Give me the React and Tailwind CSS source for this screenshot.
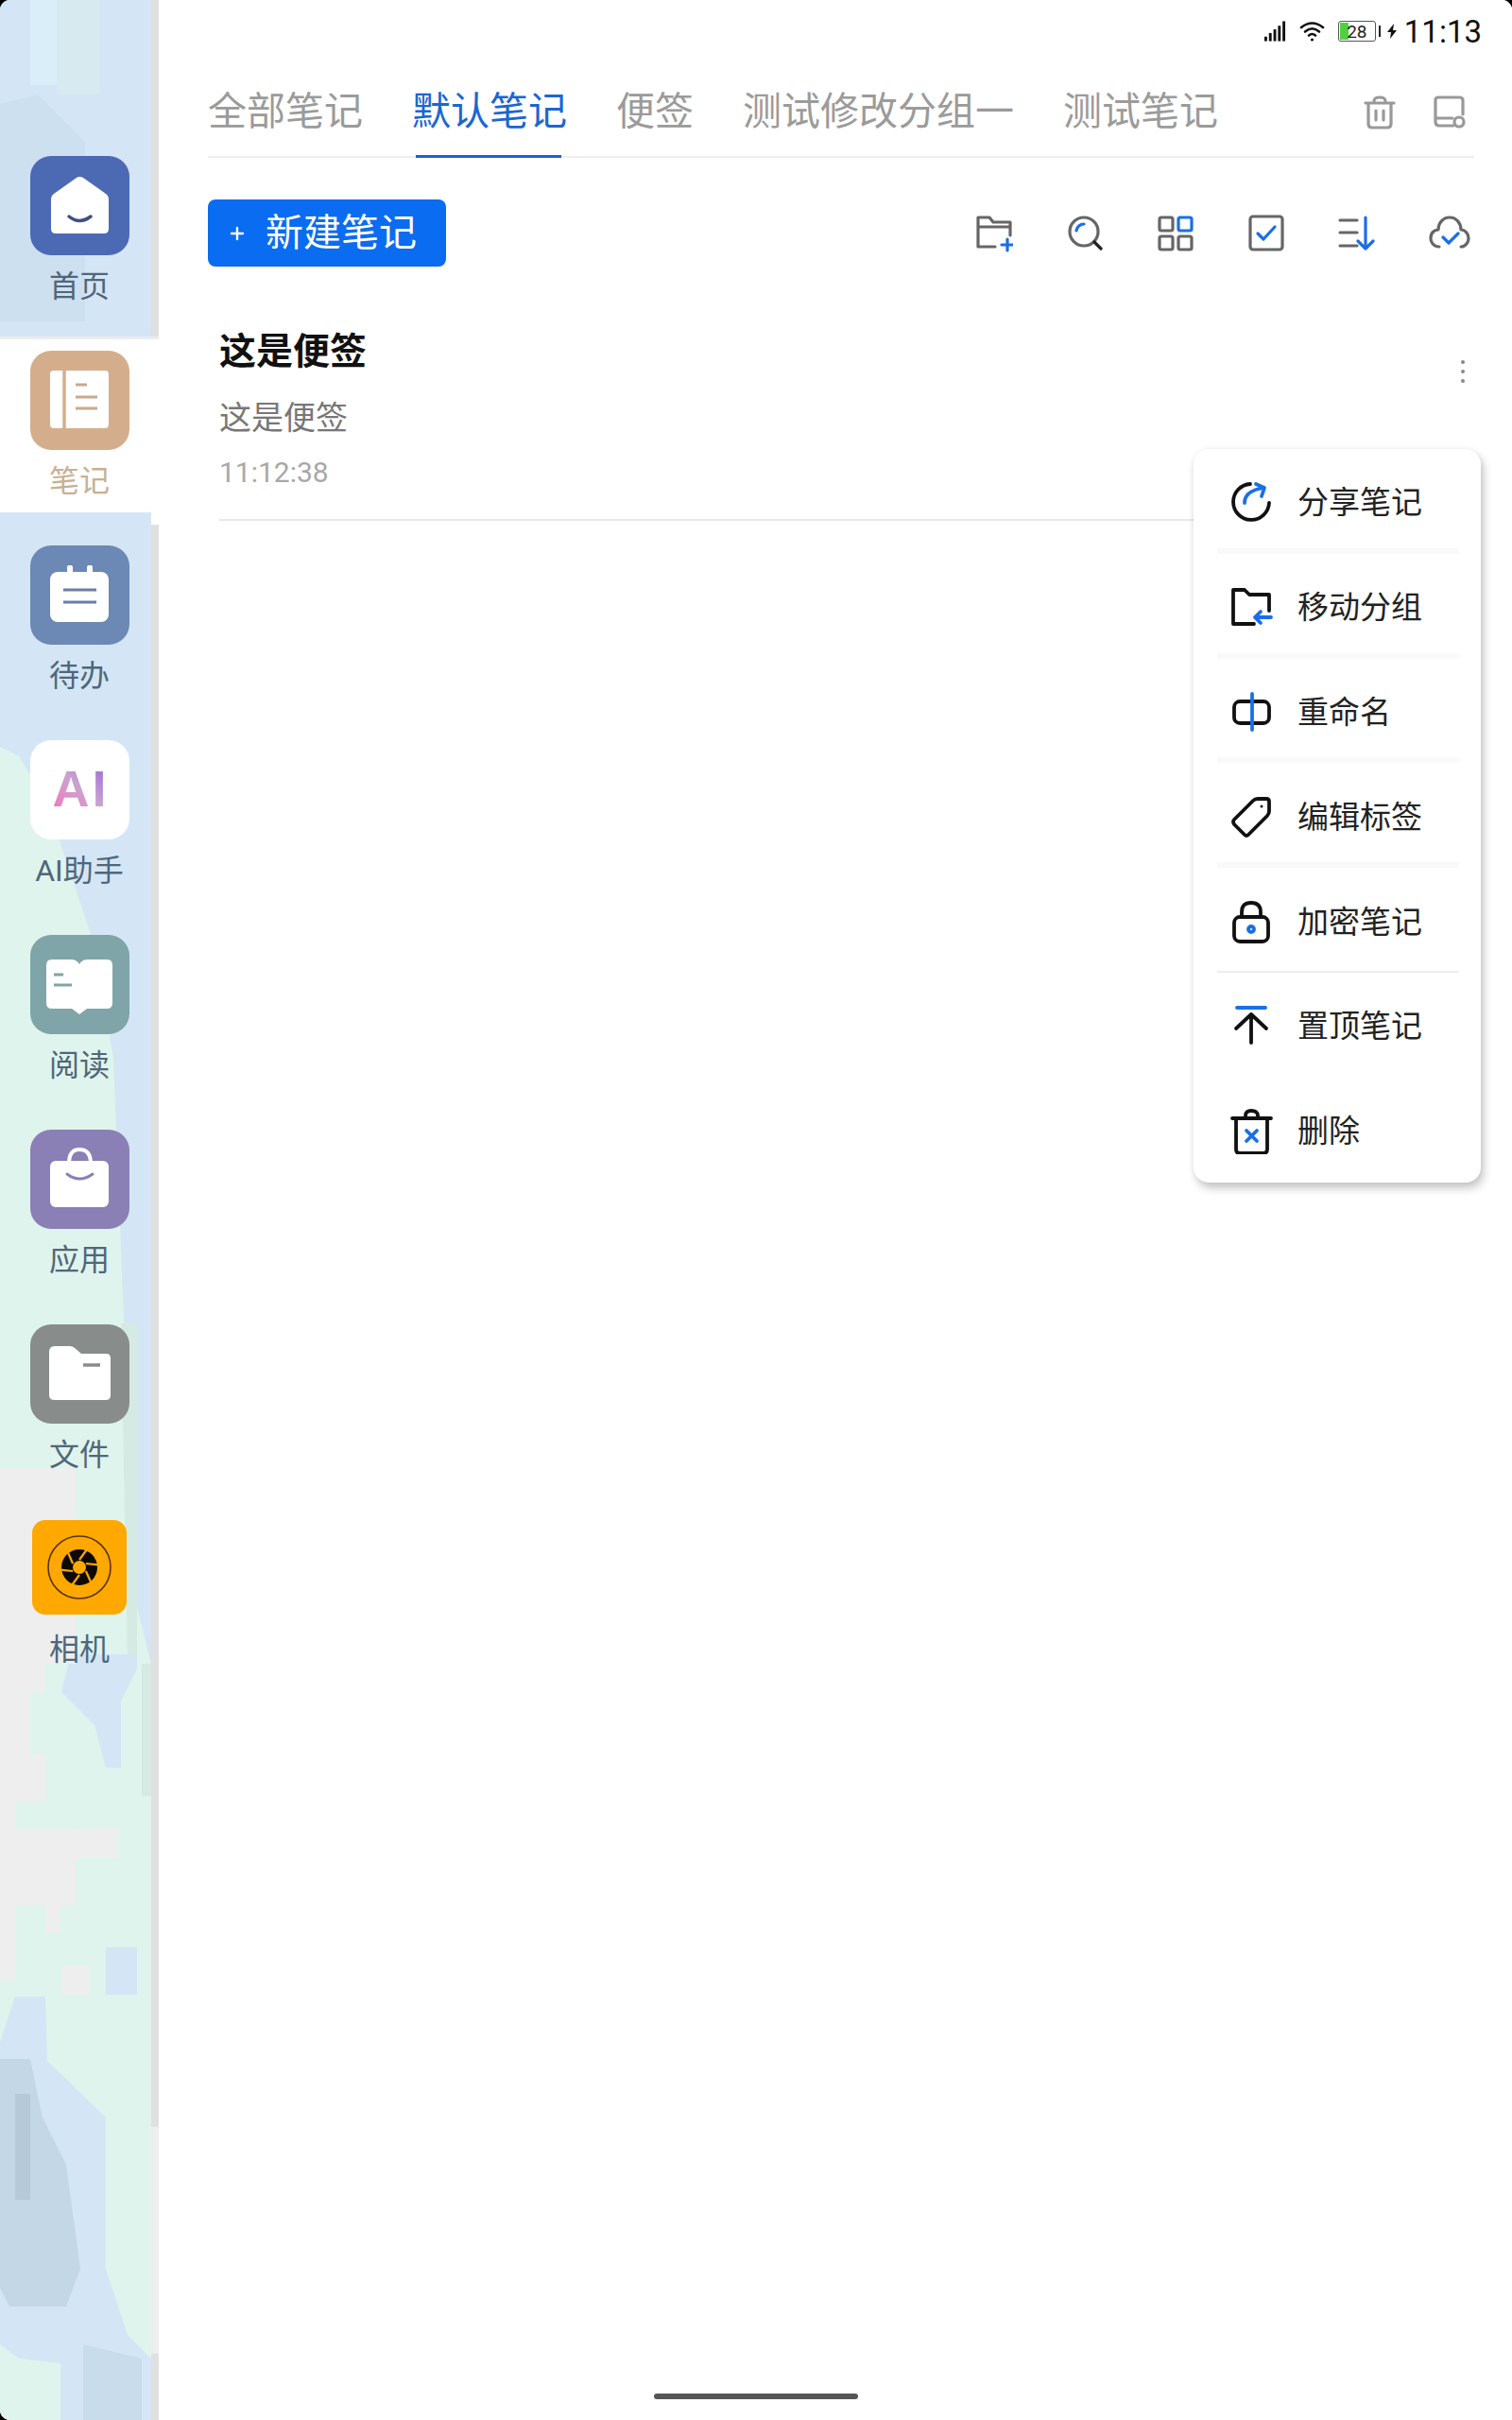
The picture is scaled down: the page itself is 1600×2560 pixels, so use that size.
import React from 'react';

const BLUE = '#1a6fe8';

function Ico({ size = 40, w, h, children, sw = 3.2, stroke = '#666' }) {
  const vw = w || size;
  const vh = h || size;
  return (
    <svg width={vw} height={vh} viewBox={`0 0 ${vw} ${vh}`} fill="none" stroke={stroke} strokeWidth={sw} strokeLinecap="round" strokeLinejoin="round" className="shrink-0">
      {children}
    </svg>
  );
}

// sidebar app icons, all drawn on a 105 box
const HomeGlyph = () => (
  <>
    <path d="M25 40 L49 23 Q52 21 56 23 L80 40 Q83 42 83 46 V77 Q83 82 78 82 H27 Q22 82 22 77 V46 Q22 42 25 40 Z" fill="#fff" />
    <path d="M41 64 Q52 73 64 64" stroke="#3f5080" strokeWidth="3.5" fill="none" strokeLinecap="round" />
  </>
);
const NotesGlyph = () => (
  <>
    <rect x="21" y="21" width="62" height="61" rx="4" fill="#fff" />
    <path d="M36 21 V82" stroke="#d4ae8c" strokeWidth="3.5" />
    <path d="M48 36 H60 M48 49 H71 M48 61 H71" stroke="#c9a98c" strokeWidth="3" fill="none" />
  </>
);
const TodoGlyph = () => (
  <>
    <rect x="21" y="28" width="62" height="53" rx="8" fill="#fff" />
    <rect x="39" y="21" width="6" height="12" rx="2" fill="#fff" />
    <rect x="60" y="21" width="6" height="12" rx="2" fill="#fff" />
    <path d="M35 47 H70 M35 60 H70" stroke="#6b7da6" strokeWidth="3" fill="none" />
  </>
);
const ReadGlyph = () => (
  <>
    <path d="M23 26 H44 Q49 26 52 31 Q55 26 60 26 H81 Q87 26 87 32 V72 Q87 78 81 78 H60 L52 84 L44 78 H23 Q17 78 17 72 V32 Q17 26 23 26 Z" fill="#fff" />
    <path d="M25 42 H35 M25 53 H44" stroke="#7fa5a8" strokeWidth="3" fill="none" />
  </>
);
const AppsGlyph = () => (
  <>
    <path d="M41 36 Q41 21 52 21 Q64 21 64 36" stroke="#fff" strokeWidth="4" fill="none" />
    <rect x="21" y="33" width="62" height="49" rx="6" fill="#fff" />
    <path d="M39 47 Q52 57 66 47" stroke="#8a80b5" strokeWidth="3" fill="none" strokeLinecap="round" />
  </>
);
const FilesGlyph = () => (
  <>
    <path d="M26 23 H42 Q45 23 47 25 L54 31 H80 Q85 31 85 36 V75 Q85 80 80 80 H26 Q20 80 20 75 V29 Q20 23 26 23 Z" fill="#fff" />
    <path d="M56 43 H74" stroke="#888d8c" strokeWidth="3.5" fill="none" />
  </>
);

function AppIcon({ bg, children }) {
  return (
    <div className={`w-[105px] h-[105px] rounded-[22px] ${bg}`}>
      <svg width="105" height="105" viewBox="0 0 105 105">{children}</svg>
    </div>
  );
}

function AiIcon() {
  return (
    <div className="w-[105px] h-[105px] rounded-[22px] bg-white flex items-center justify-center pb-[3px] pl-[3px]">
      <span className="text-[54px] leading-none font-bold tracking-[3px] font-['Liberation_Sans',sans-serif] bg-linear-to-tr from-[#f56fbf] via-[#c9a3cf] to-[#9a5fdc] bg-clip-text text-transparent">AI</span>
    </div>
  );
}

function CameraIcon() {
  const cuts = [0, 60, 120, 180, 240, 300];
  return (
    <div className="w-[100px] h-[100px] rounded-[14px] bg-[#fea800] mb-[3px]">
      <svg width="100" height="100" viewBox="0 0 100 100">
        <circle cx="50" cy="50" r="33" fill="none" stroke="#5a3300" strokeWidth="1.6" />
        <circle cx="50" cy="50" r="19" fill="#0d0a05" />
        {cuts.map(a => (
          <path key={a} d="M50 42 L58 31" stroke="#fea800" strokeWidth="2.2" transform={`rotate(${a} 50 50)`} />
        ))}
        <circle cx="50" cy="50" r="7" fill="#fea800" />
      </svg>
    </div>
  );
}

const navItems = [
  { label: '首页', icon: <AppIcon bg="bg-[#4c6ab3]"><HomeGlyph /></AppIcon> },
  { label: '笔记', active: true, icon: <AppIcon bg="bg-[#d4ae8c]"><NotesGlyph /></AppIcon> },
  { label: '待办', icon: <AppIcon bg="bg-[#6c88b4]"><TodoGlyph /></AppIcon> },
  { label: 'AI助手', icon: <AiIcon /> },
  { label: '阅读', icon: <AppIcon bg="bg-[#7fa5a8]"><ReadGlyph /></AppIcon> },
  { label: '应用', icon: <AppIcon bg="bg-[#8a80b5]"><AppsGlyph /></AppIcon> },
  { label: '文件', icon: <AppIcon bg="bg-[#888d8c]"><FilesGlyph /></AppIcon> },
  { label: '相机', icon: <CameraIcon /> },
];

function Wallpaper() {
  return (
    <svg className="absolute inset-0" width="168" height="2560" viewBox="0 0 168 2560">
      <rect width="168" height="2560" fill="#d4e6f5" />
      <path d="M32 0 H60 V90 H32 Z" fill="#daeefa" />
      <path d="M60 0 H105 V100 H60 Z" fill="#d7eaf0" />
      <path d="M0 110 L40 100 L90 150 V340 H0 Z" fill="#cde0f0" />
      {/* mint wash */}
      <path d="M0 790 L20 800 L50 850 L100 1000 L120 1120 L135 1500 L145 1700 L160 1760 V2560 H0 Z" fill="#dff4ec" />
      <path d="M128 1400 H145 V1760 H135 Z" fill="#d5eae3" />
      <path d="M150 1760 H160 V1900 H150 Z" fill="#d5eae3" />
      <path d="M75 1750 H145 V1765 L128 1800 V1870 H112 L100 1825 L65 1790 Z" fill="#d4e6f5" />
      {/* grey patch */}
      <path d="M0 1553 H80 V1760 H48 V1790 H32 V1855 H48 V1905 H17 V1935 H80 L125 1933 V1965 H80 V2015 H63 V2045 H48 V2015 H16 V2095 H0 Z" fill="#eeeeee" />
      <path d="M65 2080 H95 V2110 H65 Z" fill="#eeeeee" />
      <path d="M112 2060 H145 V2110 H112 Z" fill="#d4e6f5" />
      {/* darker blot low on the left */}
      <path d="M0 2160 L16 2112 H48 L50 2180 L112 2240 V2400 L135 2470 L160 2495 V2560 H64 V2500 L20 2495 L0 2480 Z" fill="#d4e6f5" />
      <path d="M0 2178 H32 L45 2240 L70 2290 L85 2400 L70 2440 H10 L0 2420 Z" fill="#c4d7e6" />
      <path d="M16 2215 H32 V2327 H16 Z" fill="#b5c9d9" />
      <path d="M88 2480 L150 2495 V2560 H88 Z" fill="#c9dcec" />
      <rect x="160" width="8" height="356" fill="#e0e0e0" />
      <rect x="160" y="555" width="8" height="1695" fill="#e0e0e0" />
      <rect x="160" y="2250" width="8" height="240" fill="#eeeeee" />
      <rect x="160" y="2490" width="8" height="70" fill="#e0e0e0" />
      <rect x="160" y="542" width="8" height="13" fill="#ffffff" />
    </svg>
  );
}

function Sidebar() {
  return (
    <aside className="relative w-[168px] h-[2560px] shrink-0 pt-[150px]">
      <Wallpaper />
      <div className="relative flex flex-col">
        {navItems.map(item => (
          <div key={item.label} className="h-[206px]">
            <div className={`h-[186px] flex flex-col items-center ${item.active ? 'bg-white border-t-[3px] border-[#ececec] pt-[12px]' : 'pt-[15px]'}`}>
              <div className="w-[105px] h-[105px] flex items-center justify-center">{item.icon}</div>
              <span className={`mt-[13px] text-[32px] leading-[40px] ${item.active ? 'text-[#c9b092]' : 'text-[#4f677b]'}`}>{item.label}</span>
            </div>
          </div>
        ))}
      </div>
    </aside>
  );
}

function StatusBar() {
  return (
    <div className="h-[66px] flex items-center justify-end pr-[32px] text-black">
      <svg width="23" height="22" viewBox="0 0 24 22" className="mr-[14px]">
        <rect x="0" y="17" width="3" height="5" fill="#111" />
        <rect x="5" y="13" width="3" height="9" fill="#111" />
        <rect x="10" y="9" width="3" height="13" fill="#111" />
        <rect x="15" y="5" width="3" height="17" fill="#111" />
        <rect x="20" y="0" width="3" height="22" fill="#111" />
      </svg>
      <svg width="27" height="22" viewBox="0 0 27 22" fill="none" stroke="#111" strokeWidth="2.6" strokeLinecap="round" className="mr-[14px]">
        <path d="M2 7 Q13.5 -2 25 7" />
        <path d="M6 11.5 Q13.5 5 21 11.5" />
        <path d="M10 15.5 Q13.5 12.5 17 15.5" />
        <circle cx="13.5" cy="20" r="1.6" fill="#111" stroke="none" />
      </svg>
      <div className="relative w-[40px] h-[22px] border border-[#555] rounded-[3px] flex items-center justify-center overflow-hidden">
        <div className="absolute left-[1px] top-[1px] bottom-[1px] w-[9px] bg-[#4fd13f]" />
        <span className="relative text-[19px] leading-none text-[#222]">28</span>
      </div>
      <div className="w-[2px] h-[12px] bg-[#222] ml-[3px]" />
      <svg width="12" height="16" viewBox="0 0 12 16" className="ml-[6px]">
        <path d="M8 0 L1 9 H5 L4 16 L11 7 H7 Z" fill="#111" />
      </svg>
      <span className="ml-[7px] text-[33px] leading-none text-[#111]">11:13</span>
    </div>
  );
}

const tabs = ['全部笔记', '默认笔记', '便签', '测试修改分组一', '测试笔记'];

function Tabs() {
  return (
    <div className="h-[101px] mr-[40px] border-b-2 border-[#eeeeee] flex items-center gap-[52px] pt-[6px]">
      {tabs.map((t, i) => (
        <div key={t} className={`relative h-full flex items-center text-[41px] leading-none ${i === 1 ? 'text-[#1b66d2]' : 'text-[#9b9b9b]'}`}>
          {t}
          {i === 1 && <div className="absolute left-[4px] right-[6px] bottom-[-2px] h-[3px] bg-[#1f5fd0]" />}
        </div>
      ))}
      <div className="ml-auto flex items-center gap-[40px] pr-[9px]">
        <Ico w={34} h={36} stroke="#999">
          <path d="M2 8 H32 M11 8 V6 Q11 2 17 2 Q23 2 23 6 V8 M5 8 V30 Q5 34 9 34 H25 Q29 34 29 30 V8 M13 16 V26 M21 16 V26" />
        </Ico>
        <Ico w={34} h={36} stroke="#999">
          <path d="M21 32 H6 Q2 32 2 28 V5 Q2 2 5 2 H27 Q31 2 31 5 V20 M2 24 H20" />
          <circle cx="27" cy="28" r="5" />
        </Ico>
      </div>
    </div>
  );
}

function Toolbar() {
  return (
    <div className="mt-[44px] mr-[40px] h-[71px] flex items-center">
      <button className="w-[252px] h-[71px] rounded-[8px] bg-[#0a6cf0] text-white flex items-center pl-[23px]">
        <svg width="16" height="16" viewBox="0 0 16 16" stroke="#fff" strokeWidth="2.4" strokeLinecap="round">
          <path d="M8 2 V14 M2 8 H14" />
        </svg>
        <span className="ml-[22px] text-[40px] leading-none">新建笔记</span>
      </button>
      <div className="ml-auto flex items-center gap-[56px] pr-[4px]">
        <Ico>
          <path d="M21 34 H3 V3 H15 L19 8 H37 V22 M3 13 H37" />
          <path d="M34 26 V38 M28 32 H40" stroke={BLUE} />
        </Ico>
        <Ico>
          <circle cx="19" cy="18" r="15" />
          <path d="M11 17 A8 8 0 0 1 19 10" stroke={BLUE} />
          <path d="M30 29 L37 36" stroke="#222" />
        </Ico>
        <Ico>
          <rect x="3" y="3" width="14" height="14" rx="2" />
          <rect x="23" y="3" width="14" height="14" rx="2" stroke={BLUE} />
          <rect x="3" y="23" width="14" height="14" rx="2" />
          <rect x="23" y="23" width="14" height="14" rx="2" />
        </Ico>
        <Ico>
          <rect x="3" y="2" width="34" height="35" rx="3" />
          <path d="M11 20 L17 26 L29 13" stroke={BLUE} />
        </Ico>
        <Ico>
          <path d="M2 6 H20 M2 19 H20 M2 33 H20" />
          <path d="M29 3 V36 M21 28 L29 36 L37 28" stroke={BLUE} />
        </Ico>
        <Ico w={44} h={40}>
          <path d="M11 34 C4 34 2 28 2 25 C2 19 6 16 10 16 C10 9 15 3 22 3 C29 3 34 9 34 16 C38 16 42 20 42 25 C42 29 39 34 34 34" />
          <path d="M15 24 L21 30 L31 20" stroke={BLUE} />
        </Ico>
      </div>
    </div>
  );
}

function NoteCard() {
  return (
    <div className="relative mt-[65px] ml-[12px] mr-[40px] pb-[31px] border-b-2 border-[#e8e8e8]">
      <div className="text-[39px] leading-[50px] font-bold text-[#111]">这是便签</div>
      <div className="mt-[23px] text-[34px] leading-[44px] text-[#777]">这是便签</div>
      <div className="mt-[18px] text-[30px] leading-[36px] text-[#a8a8a8]">11:12:38</div>
      <div className="absolute right-[10px] top-[34px] flex flex-col gap-[6px]">
        <span className="w-[4px] h-[4px] rounded-full bg-[#888]" />
        <span className="w-[4px] h-[4px] rounded-full bg-[#888]" />
        <span className="w-[4px] h-[4px] rounded-full bg-[#888]" />
      </div>
    </div>
  );
}

const menuItems = [
  {
    label: '分享笔记', line: true,
    icon: (<>
      <path d="M21 3 A19 19 0 1 0 41 23" />
      <path d="M15 23 C15 14 23 9 35 7 M27 3 L36 7 L33 16" stroke={BLUE} />
    </>),
  },
  {
    label: '移动分组', line: true,
    icon: (<>
      <path d="M25 40 H3 V4 H15 L20 9 H41 V26" />
      <path d="M43 33 H26 M32 27 L26 33 L32 39" stroke={BLUE} />
    </>),
  },
  {
    label: '重命名', line: true,
    icon: (<>
      <rect x="4" y="11" width="37" height="23" rx="6" />
      <path d="M23 3 V41" stroke={BLUE} />
    </>),
  },
  {
    label: '编辑标签', line: true,
    icon: (<>
      <path d="M4 25 L24 5 Q26 3 29 3 H38 Q41 3 41 6 V16 Q41 19 39 21 L19 41 Q17 43 15 41 L4 30 Q2 27 4 25 Z" />
      <circle cx="33" cy="11" r="1.5" fill="#111" stroke="none" />
    </>),
  },
  {
    label: '加密笔记', line: 'strong',
    icon: (<>
      <rect x="4" y="17" width="36" height="26" rx="6" />
      <path d="M12 17 V12 Q12 2 22 2 Q32 2 32 12 V17" />
      <circle cx="22" cy="30" r="3" stroke={BLUE} />
    </>),
  },
  {
    label: '置顶笔记',
    icon: (<>
      <path d="M7 3 H37" stroke={BLUE} />
      <path d="M22 10 V40 M6 25 L22 10 L38 25" />
    </>),
  },
  {
    label: '删除',
    icon: (<>
      <path d="M2 10 H43 M16 10 V7 Q16 2 22 2 Q29 2 29 7 V10 M6 10 V43 Q6 47 10 47 H35 Q39 47 39 43 V10" />
      <path d="M17 23 L28 34 M28 23 L17 34" stroke={BLUE} />
    </>),
  },
];

function Menu() {
  return (
    <div className="absolute top-[475px] right-[33px] w-[304px] rounded-[16px] bg-white shadow-[3px_6px_10px_rgba(0,0,0,0.22),0_0_6px_rgba(0,0,0,0.06)]">
      {menuItems.map(m => (
        <div key={m.label} className="relative h-[110.8px] flex items-center pl-[39px] pt-[3px]">
          <div className="w-[45px] flex justify-center">
            <Ico w={45} h={m.label === '删除' ? 48 : 45} stroke="#111" sw={3.8}>{m.icon}</Ico>
          </div>
          <span className="ml-[26px] text-[33px] leading-none text-[#222]">{m.label}</span>
          {m.line && <div className={`absolute left-[25px] right-[23px] bottom-0 ${m.line === 'strong' ? 'h-[2px] bg-[#eeeeee]' : 'h-[6px] bg-[#f9f9f9]'}`} />}
        </div>
      ))}
    </div>
  );
}

function Corner({ className, d }) {
  return (
    <svg width="12" height="12" viewBox="0 0 12 12" className={`absolute ${className}`}>
      <path d={d} fill="#000" />
    </svg>
  );
}

export default function App() {
  return (
    <div lang="zh-CN" className="relative flex w-[1600px] h-[2560px] overflow-hidden bg-white font-['Roboto','Noto_Sans_CJK_SC',sans-serif]">
      <Sidebar />
      <main className="relative flex-1 pl-[52px]">
        <StatusBar />
        <Tabs />
        <Toolbar />
        <NoteCard />
        <Menu />
      </main>

      {/* home indicator and the screen's rounded corners */}
      <div className="absolute left-[692px] top-[2532px] w-[216px] h-[6px] rounded-full bg-[#555]" />
      <Corner className="left-0 top-0" d="M0 0 H8 Q2 2 0 8 Z" />
      <Corner className="right-0 top-0" d="M12 0 H4 Q10 2 12 8 Z" />
      <Corner className="left-0 bottom-0" d="M0 12 H8 Q2 10 0 4 Z" />
    </div>
  );
}
